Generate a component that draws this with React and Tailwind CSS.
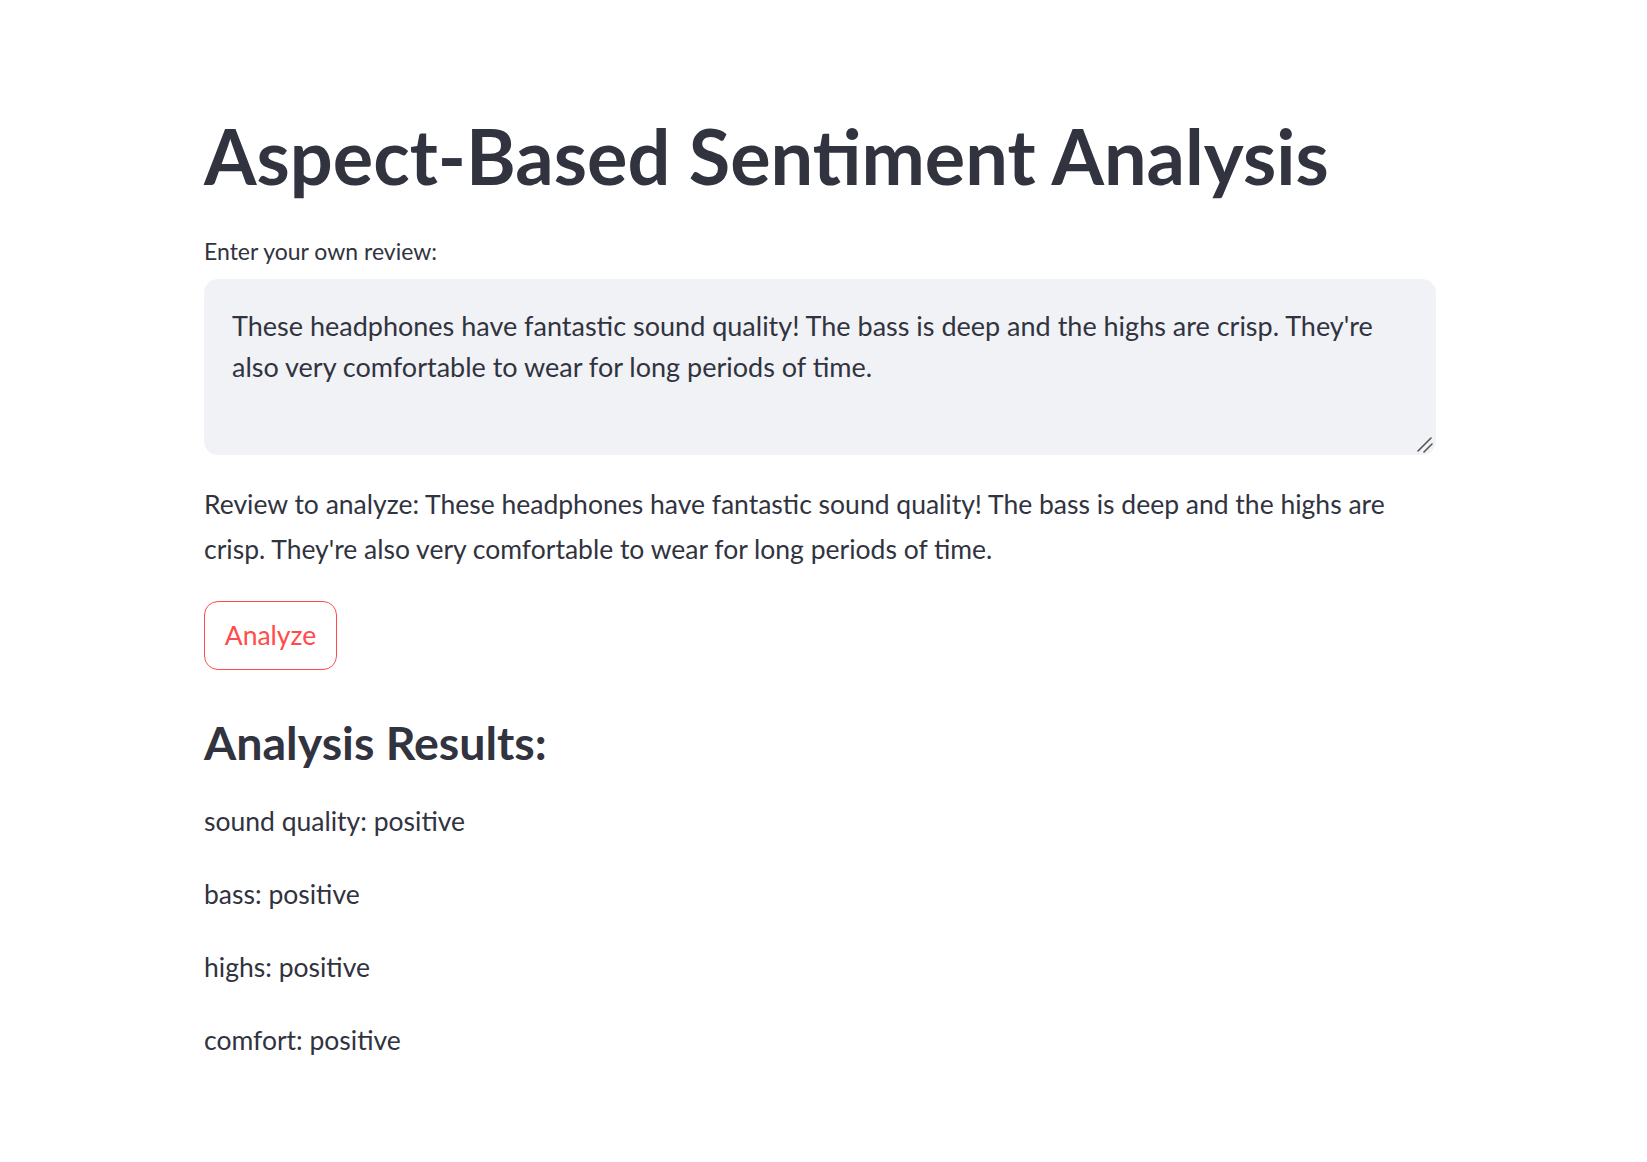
import React from 'react'

const review =
  "These headphones have fantastic sound quality! The bass is deep and the highs are crisp. They're also very comfortable to wear for long periods of time."

const results = [
  { aspect: 'sound quality', sentiment: 'positive' },
  { aspect: 'bass', sentiment: 'positive' },
  { aspect: 'highs', sentiment: 'positive' },
  { aspect: 'comfort', sentiment: 'positive' },
]

export default function App() {
  return (
    <div className="min-h-screen bg-white text-[#31333f] font-['Lato',sans-serif]">
      <div className="ml-[204px] w-[1232px] pt-[112px] flex flex-col">
        <h1 className="text-[75.7px] leading-[88px] font-bold">
          Aspect-Based Sentiment Analysis
        </h1>

        <label className="mt-[36px] text-[23px] leading-[30px]">Enter your own review:</label>
        <div className="relative mt-[13px]">
          <textarea
            className="block h-[176px] w-full rounded-[14px] bg-[#f0f2f6] px-[28px] pt-[26px] pb-[20px] text-[27px] leading-[41px] outline-none resize-none"
            defaultValue={review}
          />
          {/* resize grip */}
          <svg className="absolute right-[3px] bottom-[2px]" width="16" height="16" viewBox="0 0 16 16">
            <path d="M1 14 L14 1 M7 15 L15 7" stroke="#555" strokeWidth="1.6" strokeLinecap="round" />
          </svg>
        </div>

        <p className="mt-[27px] text-[26.5px] leading-[45px]">Review to analyze: {review}</p>

        <div className="mt-[29px]">
          <button className="h-[69px] w-[133px] rounded-[14px] border border-[#ff4b4b] bg-white text-[26.5px] text-[#ff4b4b]">
            Analyze
          </button>
        </div>

        <h3 className="mt-[42px] text-[46.5px] leading-[60px] font-bold">Analysis Results:</h3>

        <div className="mt-[27px] flex flex-col gap-[28px]">
          {results.map((r) => (
            <p key={r.aspect} className="text-[26.5px] leading-[45px]">
              {r.aspect}: {r.sentiment}
            </p>
          ))}
        </div>
      </div>
    </div>
  )
}
